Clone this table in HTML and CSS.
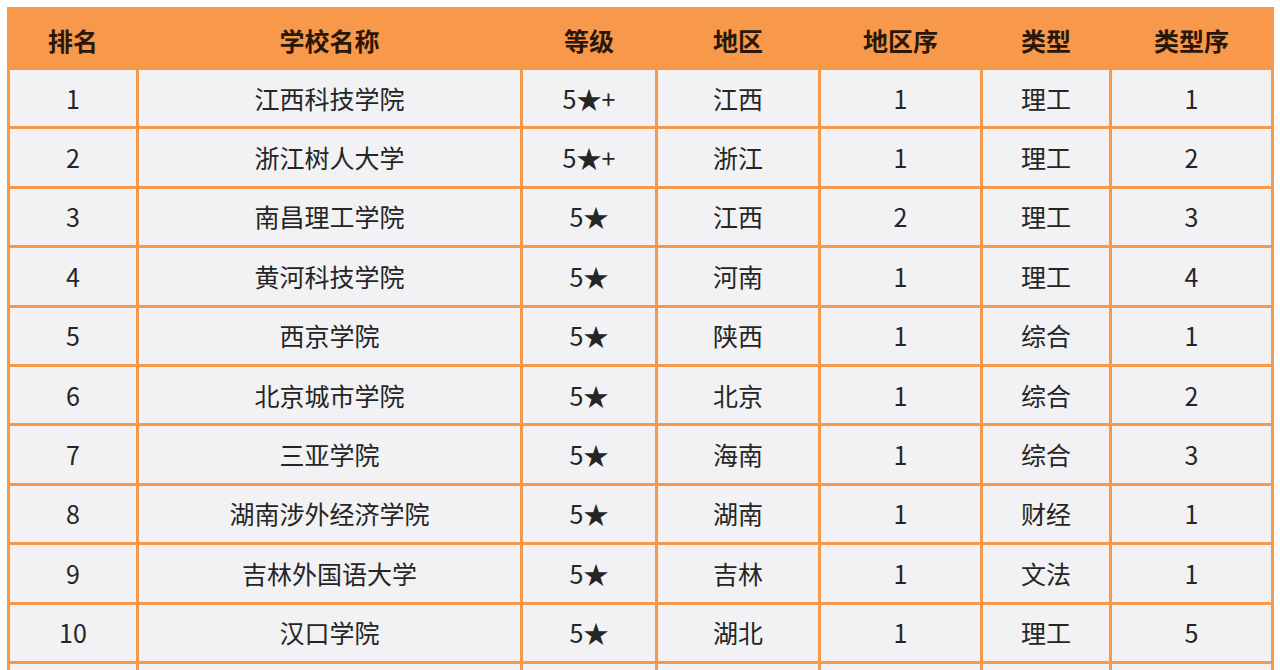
FILE: index.html
```html
<!DOCTYPE html>
<html lang="zh-CN">
<head>
<meta charset="utf-8">
<title>排名</title>
<link rel="stylesheet" href="styles.css">
</head>
<body>
<table class="rank">
  <colgroup>
    <col class="c1"><col class="c2"><col class="c3"><col class="c4"><col class="c5"><col class="c6"><col class="c7">
  </colgroup>
  <thead>
    <tr><th>排名</th><th>学校名称</th><th>等级</th><th>地区</th><th>地区序</th><th>类型</th><th>类型序</th></tr>
  </thead>
  <tbody>
    <tr><td>1</td><td>江西科技学院</td><td>5★+</td><td>江西</td><td>1</td><td>理工</td><td>1</td></tr>
    <tr><td>2</td><td>浙江树人大学</td><td>5★+</td><td>浙江</td><td>1</td><td>理工</td><td>2</td></tr>
    <tr><td>3</td><td>南昌理工学院</td><td>5★</td><td>江西</td><td>2</td><td>理工</td><td>3</td></tr>
    <tr><td>4</td><td>黄河科技学院</td><td>5★</td><td>河南</td><td>1</td><td>理工</td><td>4</td></tr>
    <tr><td>5</td><td>西京学院</td><td>5★</td><td>陕西</td><td>1</td><td>综合</td><td>1</td></tr>
    <tr><td>6</td><td>北京城市学院</td><td>5★</td><td>北京</td><td>1</td><td>综合</td><td>2</td></tr>
    <tr><td>7</td><td>三亚学院</td><td>5★</td><td>海南</td><td>1</td><td>综合</td><td>3</td></tr>
    <tr><td>8</td><td>湖南涉外经济学院</td><td>5★</td><td>湖南</td><td>1</td><td>财经</td><td>1</td></tr>
    <tr><td>9</td><td>吉林外国语大学</td><td>5★</td><td>吉林</td><td>1</td><td>文法</td><td>1</td></tr>
    <tr><td>10</td><td>汉口学院</td><td>5★</td><td>湖北</td><td>1</td><td>理工</td><td>5</td></tr>
    <tr class="cut"><td></td><td></td><td></td><td></td><td></td><td></td><td></td></tr>
  </tbody>
</table>
</body>
</html>
```

FILE: styles.css
```css
html, body {
  margin: 0;
  padding: 0;
  background: #ffffff;
  overflow: hidden;
}
body {
  padding: 7px 0 0 7px;
  font-family: "Noto Sans CJK SC", "Noto Sans", sans-serif;
}
.rank {
  table-layout: fixed;
  border-collapse: separate;
  border-spacing: 3px;
  background: #f7984a;
  width: 1267px;
}
.c1 { width: 126px; }
.c2 { width: 381px; }
.c3 { width: 132px; }
.c4 { width: 160px; }
.c5 { width: 159px; }
.c6 { width: 126px; }
.c7 { width: 159px; }
.rank th,
.rank td {
  padding: 0;
  text-align: center;
  vertical-align: middle;
  font-size: 25px;
  line-height: 1;
}
.rank th {
  height: 53px;
  padding-top: 4px;
  background: #f7984a;
  color: #2b170a;
  font-weight: 700;
}
.rank td {
  height: 56.4px;
  background: #f2f2f4;
  color: #252525;
  font-weight: 400;
}
```
